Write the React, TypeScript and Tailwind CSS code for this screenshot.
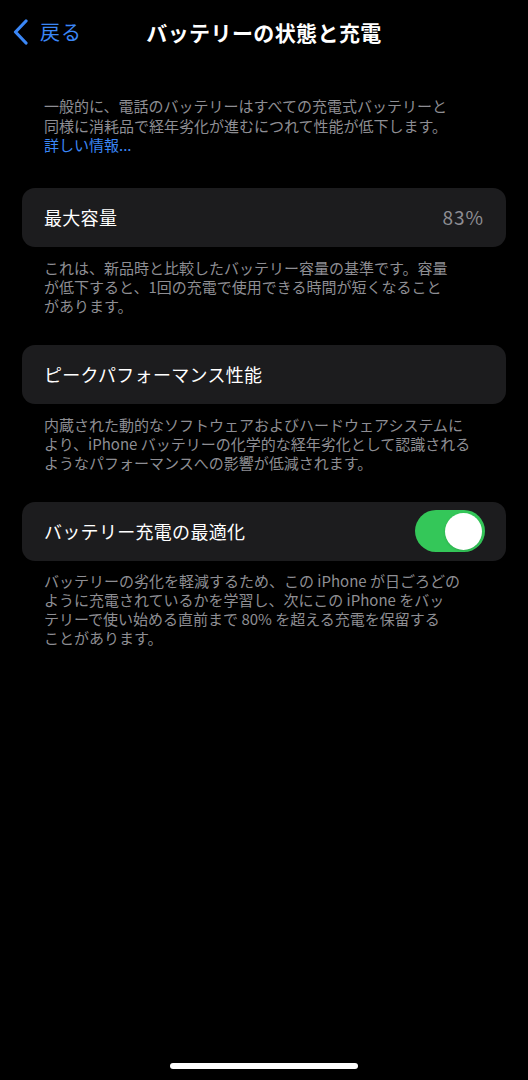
import React from 'react';

const font = { fontFamily: '"Noto Sans CJK JP", "Noto Sans", sans-serif' };

const Footer: React.FC<{ lines: string[] }> = ({ lines }) => (
  <p className="px-[44px] text-[15px] leading-[19px] text-[#8e8e93]">
    {lines.map((l, i) => (
      <span key={i} className="block whitespace-nowrap">
        {l}
      </span>
    ))}
  </p>
);

const Card: React.FC<{ children: React.ReactNode }> = ({ children }) => (
  <div className="mx-[22px] h-[59px] rounded-[13px] bg-[#1c1c1e] px-[22px] flex items-center justify-between">
    {children}
  </div>
);

export default function App() {
  return (
    <div className="min-h-[1080px] w-full bg-black text-white flex flex-col" style={font}>
      <header className="h-[64px] grid grid-cols-[1fr_auto_1fr] items-center">
        <button className="flex items-center gap-[10px] pl-[12px] text-[#3b87f6]">
          <svg width="18" height="26" viewBox="0 0 18 26" fill="none">
            <path d="M14 2 L3.5 13 L14 24" stroke="#3b87f6" strokeWidth="3.2" strokeLinecap="round" strokeLinejoin="round" />
          </svg>
          <span className="text-[20px] tracking-[1px] leading-none">戻る</span>
        </button>
        <h1 className="text-[21px] font-bold tracking-[0.4px] leading-none">バッテリーの状態と充電</h1>
        <div />
      </header>

      <div className="mt-[32px] px-[44px] text-[15px] leading-[19.5px] text-[#8e8e93]">
        <span className="block whitespace-nowrap">一般的に、電話のバッテリーはすべての充電式バッテリーと</span>
        <span className="block whitespace-nowrap">同様に消耗品で経年劣化が進むにつれて性能が低下します。</span>
        <span className="block text-[#3b87f6]">詳しい情報...</span>
      </div>

      <div className="mt-[33px]">
        <Card>
          <span className="text-[18px] tracking-[0.3px]">最大容量</span>
          <span className="text-[19px] tracking-[1px] text-[#8e8e93]">83%</span>
        </Card>
        <div className="mt-[11px]">
          <Footer
            lines={[
              'これは、新品時と比較したバッテリー容量の基準です。容量',
              'が低下すると、1回の充電で使用できる時間が短くなること',
              'があります。',
            ]}
          />
        </div>
      </div>

      <div className="mt-[30px]">
        <Card>
          <span className="text-[18px] tracking-[0.3px]">ピークパフォーマンス性能</span>
        </Card>
        <div className="mt-[11px]">
          <Footer
            lines={[
              '内蔵された動的なソフトウェアおよびハードウェアシステムに',
              'より、iPhone バッテリーの化学的な経年劣化として認識される',
              'ようなパフォーマンスへの影響が低減されます。',
            ]}
          />
        </div>
      </div>

      <div className="mt-[30px]">
        <Card>
          <span className="text-[18px] tracking-[0.3px]">バッテリー充電の最適化</span>
          <div className="w-[70px] h-[42px] rounded-full bg-[#34c759] flex items-center justify-end pr-[3px] -mr-[1px]">
            <div className="w-[37px] h-[37px] rounded-full bg-white shadow" />
          </div>
        </Card>
        <div className="mt-[10px]">
          <Footer
            lines={[
              'バッテリーの劣化を軽減するため、この iPhone が日ごろどの',
              'ように充電されているかを学習し、次にこの iPhone をバッ',
              'テリーで使い始める直前まで 80% を超える充電を保留する',
              'ことがあります。',
            ]}
          />
        </div>
      </div>

      <div className="mt-auto mb-[11px] flex justify-center">
        <div className="w-[188px] h-[6px] rounded-full bg-white" />
      </div>
    </div>
  );
}
